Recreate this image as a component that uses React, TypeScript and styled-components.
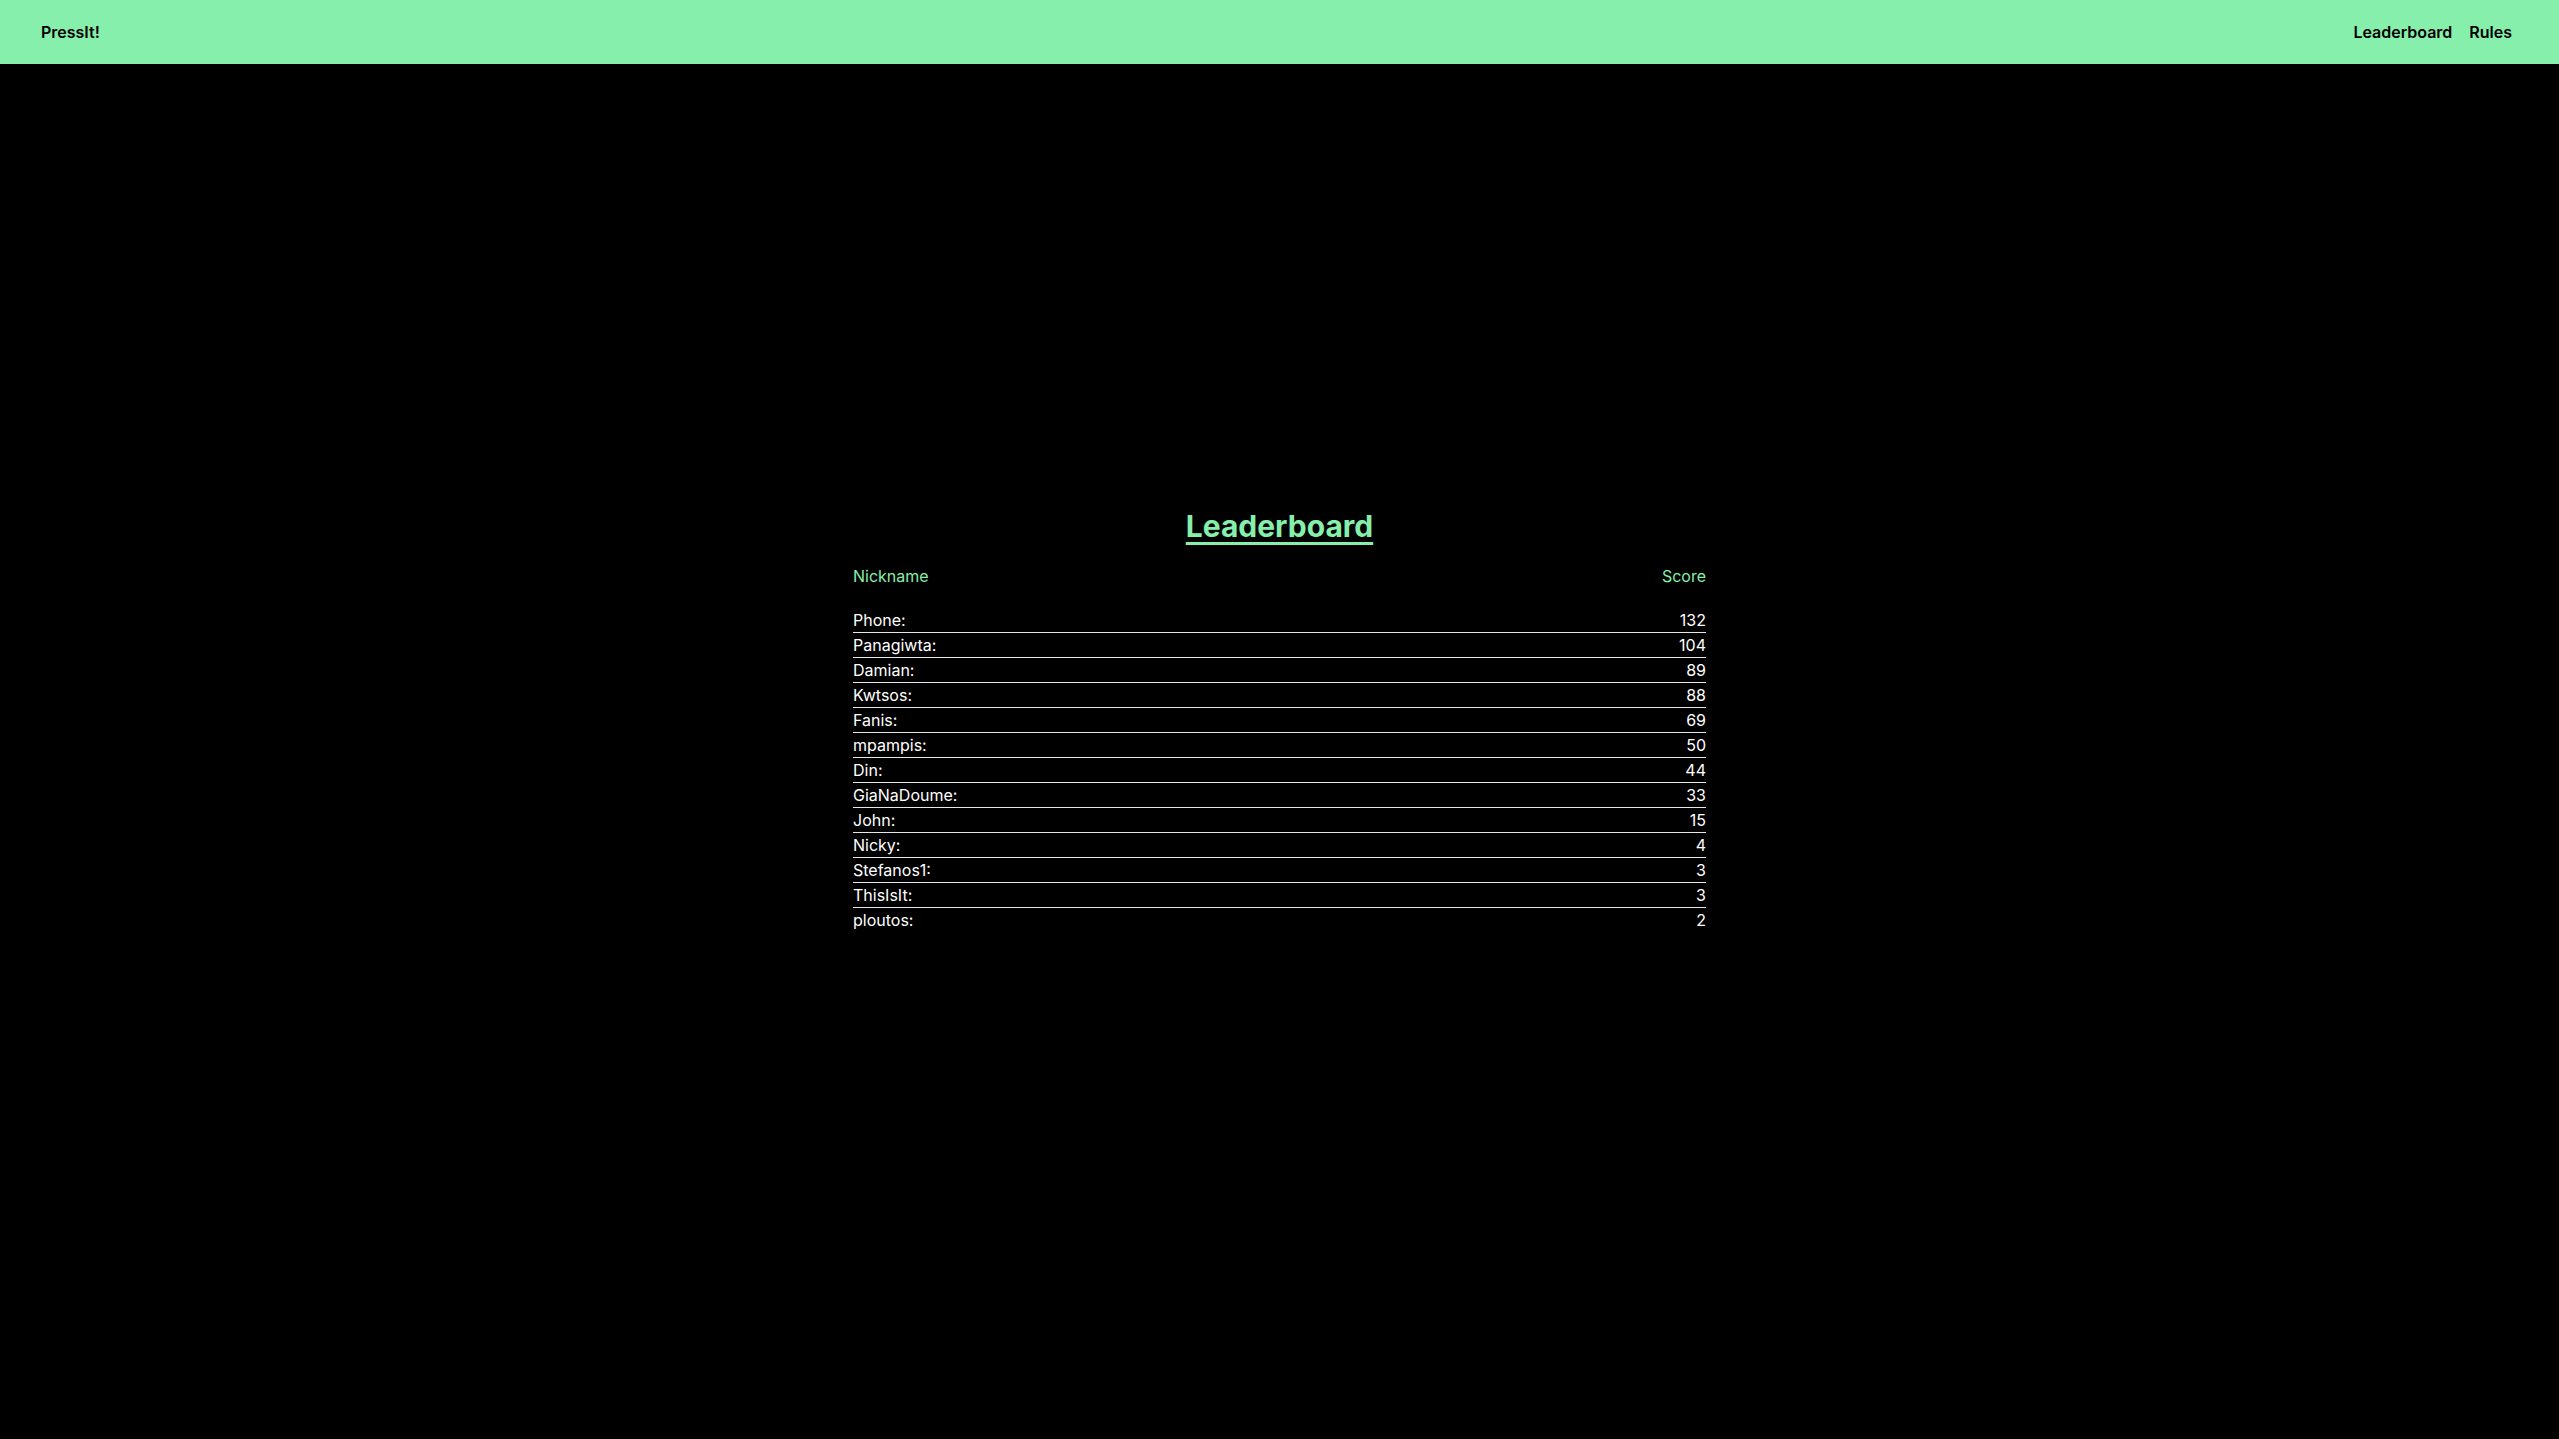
import React from "react";
import styled, { createGlobalStyle } from "styled-components";

const GlobalStyle = createGlobalStyle`
  html, body {
    margin: 0;
    padding: 0;
    background: #000;
    font-family: Inter, "Noto Sans", sans-serif;
  }
  * { box-sizing: border-box; }
`;

const Page = styled.div`
  min-height: 100vh;
  display: flex;
  flex-direction: column;
  background: #000;
`;

const TopBar = styled.header`
  height: 64px;
  background: #86efac;
  display: flex;
  align-items: center;
  justify-content: space-between;
  padding: 0 47px 0 41px;
`;

const Brand = styled.a`
  font-size: 16px;
  font-weight: 600;
  color: #000;
  text-decoration: none;
`;

const Nav = styled.nav`
  display: flex;
  align-items: center;
  gap: 17px;
`;

const NavLink = styled.a`
  font-size: 16px;
  font-weight: 600;
  color: #000;
  text-decoration: none;
`;

const Main = styled.main`
  flex: 1;
  display: flex;
  flex-direction: column;
  align-items: center;
  justify-content: center;
  padding-bottom: 64px;
`;

const Title = styled.h1`
  margin: 0 0 20px;
  font-size: 30px;
  line-height: 36px;
  font-weight: 700;
  color: #86efac;
  text-decoration: underline;
  text-underline-offset: 5px;
`;

const Table = styled.table`
  width: 853px;
  border-collapse: collapse;
  font-size: 16px;
  line-height: 24px;
`;

const HeadCell = styled.th<{ $align: "left" | "right" }>`
  padding: 0 0 20px;
  font-weight: 400;
  color: #86efac;
  text-align: ${(p) => p.$align};
`;

const Row = styled.tr<{ $last: boolean }>`
  border-bottom: ${(p) => (p.$last ? "none" : "1px solid #e5e7eb")};
`;

const Cell = styled.td<{ $align: "left" | "right" }>`
  padding: 0;
  color: #fff;
  text-align: ${(p) => p.$align};
`;

const scores: [string, number][] = [
  ["Phone", 132],
  ["Panagiwta", 104],
  ["Damian", 89],
  ["Kwtsos", 88],
  ["Fanis", 69],
  ["mpampis", 50],
  ["Din", 44],
  ["GiaNaDoume", 33],
  ["John", 15],
  ["Nicky", 4],
  ["Stefanos1", 3],
  ["ThisIsIt", 3],
  ["ploutos", 2],
];

export default function App() {
  return (
    <>
      <GlobalStyle />
      <Page>
        <TopBar>
          <Brand href="#">PressIt!</Brand>
          <Nav>
            <NavLink href="#">Leaderboard</NavLink>
            <NavLink href="#">Rules</NavLink>
          </Nav>
        </TopBar>
        <Main>
          <Title>Leaderboard</Title>
          <Table>
            <thead>
              <tr>
                <HeadCell $align="left">Nickname</HeadCell>
                <HeadCell $align="right">Score</HeadCell>
              </tr>
            </thead>
            <tbody>
              {scores.map(([name, score], i) => (
                <Row key={name} $last={i === scores.length - 1}>
                  <Cell $align="left">{name}:</Cell>
                  <Cell $align="right">{score}</Cell>
                </Row>
              ))}
            </tbody>
          </Table>
        </Main>
      </Page>
    </>
  );
}
